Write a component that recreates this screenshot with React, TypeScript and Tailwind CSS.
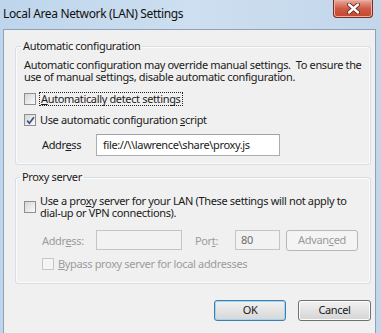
import type { ReactNode } from "react";

function Check({ checked = false, disabled = false }: { checked?: boolean; disabled?: boolean }) {
  return (
    <span
      className={`flex h-[12px] w-[12px] shrink-0 items-center justify-center border ${
        disabled
          ? "border-[#c6c6c6] bg-[#f4f4f4]"
          : "border-[#8e8f8f] bg-linear-to-br from-[#d6d6d6] to-[#fafafa]"
      }`}
    >
      {checked && (
        <svg width="9" height="9" viewBox="0 0 9 9">
          <path d="M1.2 4.6 L3.4 7.2 L7.9 1.2" stroke="#3a5186" strokeWidth="1.7" fill="none" />
        </svg>
      )}
    </span>
  );
}

function Key({ children }: { children: ReactNode }) {
  return <span className="underline underline-offset-[1px]">{children}</span>;
}

function Button({ children, primary = false, disabled = false, className = "" }: { children: ReactNode; primary?: boolean; disabled?: boolean; className?: string }) {
  return (
    <div
      className={`flex items-center justify-center rounded-[3px] border ${
        disabled
          ? "border-[#b5b8ba] bg-[#f4f4f4] text-[#9a9a9a]"
          : primary
          ? "border-[#3c7fb1] bg-linear-to-b from-[#f2f2f2] to-[#d6d6d6] shadow-[inset_0_0_0_1px_#a6d4f0]"
          : "border-[#707070] bg-linear-to-b from-[#f2f2f2] to-[#d4d4d4] shadow-[inset_0_0_0_1px_#fcfcfc]"
      } ${className}`}
    >
      {children}
    </div>
  );
}

export default function App() {
  return (
    <div className="flex h-[333px] w-[381px] flex-col overflow-hidden bg-linear-to-r from-[#bed5ec] via-[#cddff0] to-[#c3d6ea] font-['Segoe_UI','Noto_Sans',sans-serif] text-[11px] tracking-[-0.35px] text-[#1a1a1a] whitespace-nowrap">
      {/* title bar */}
      <div className="flex h-[29px] shrink-0 items-start justify-between pl-[3px] pr-[8px]">
        <span className="mt-[6px] text-[12px] leading-[16px] text-[#101010]">Local Area Network (LAN) Settings</span>
        <div className="flex h-[18px] w-[40px] items-center justify-center rounded-b-[4px] border border-t-0 border-[#7b2d23] bg-linear-to-b from-[#e8a99d] via-[#cf5a45] to-[#c5452f] shadow-[inset_0_0_0_1px_#eab0a5]">
          <svg width="13" height="11" viewBox="0 0 13 11">
            <path d="M2 1.5 L11 9.5 M11 1.5 L2 9.5" stroke="#5b1d14" strokeWidth="4" strokeLinecap="round" />
            <path d="M2 1.5 L11 9.5 M11 1.5 L2 9.5" stroke="#ffffff" strokeWidth="2.4" strokeLinecap="round" />
          </svg>
        </div>
      </div>

      {/* client area */}
      <div className="ml-[3px] mr-[5px] flex flex-1 flex-col border-l border-r border-t border-[#8da2b6] bg-[#f0f0f0] pl-[11px] pr-[4px]">
        <fieldset className="mt-[9px] rounded-[3px] border border-[#d5dfe5] px-[8px] pb-[8px] shadow-[inset_0_0_0_1px_#fbfbfb]">
          <legend className="-ml-[3px] px-[2px] leading-[14px]">Automatic configuration</legend>
          <div className="mt-[6px] leading-[12px]">
            Automatic configuration may override manual settings.&nbsp; To ensure the
            <br />
            use of manual settings, disable automatic configuration.
          </div>
          <div className="mt-[9px] flex h-[14px] items-center gap-[3px]">
            <Check />
            <span className="border border-dotted border-[#222] px-[1px] leading-[12px]">
              <Key>A</Key>utomatically detect settings
            </span>
          </div>
          <div className="mt-[7px] flex h-[14px] items-center gap-[4px]">
            <Check checked />
            <span className="leading-[12px]">
              Use automatic configuration <Key>s</Key>cript
            </span>
          </div>
          <div className="mt-[7px] flex h-[22px] items-center">
            <span className="w-[72px] pl-[18px]">
              Addr<Key>e</Key>ss
            </span>
            <div className="flex h-[22px] w-[184px] items-center border border-[#abadb3] border-t-[#a0a3aa] bg-white pl-[6px]">
              file://\\lawrence\share\proxy.js
            </div>
          </div>
        </fieldset>

        <fieldset className="mt-[5px] rounded-[3px] border border-[#d5dfe5] px-[8px] pb-[12px] shadow-[inset_0_0_0_1px_#fbfbfb]">
          <legend className="-ml-[4px] px-[2px] leading-[14px]">Proxy server</legend>
          <div className="mt-[11px] flex items-center gap-[4px]">
            <Check />
            <span className="leading-[12px]">
              Use a pro<Key>x</Key>y server for your LAN (These settings will not apply to
              <br />
              dial-up or VPN connections).
            </span>
          </div>
          <div className="mt-[11px] flex h-[21px] items-start text-[#9c9c9c]">
            <span className="mt-[3px] w-[72px] pl-[18px]">
              Addr<Key>e</Key>ss:
            </span>
            <div className="h-[20px] w-[86px] border border-[#c5c5c5] bg-[#f2f2f2]" />
            <span className="ml-[13px] mt-[3px] w-[40px]">
              Por<Key>t</Key>:
            </span>
            <div className="flex h-[20px] w-[45px] items-center border border-[#c5c5c5] bg-[#f2f2f2] pl-[5px] text-[#6d6d6d]">80</div>
            <Button disabled className="ml-[6px] h-[21px] w-[72px]">
              <span>
                Advan<Key>c</Key>ed
              </span>
            </Button>
          </div>
          <div className="mt-[6px] flex h-[14px] items-center gap-[4px] pl-[18px] text-[#9c9c9c]">
            <Check disabled />
            <span className="leading-[12px]">
              <Key>B</Key>ypass proxy server for local addresses
            </span>
          </div>
        </fieldset>

        <div className="mt-[16px] flex justify-end gap-[12px]">
          <Button primary className="h-[21px] w-[72px]">
            OK
          </Button>
          <Button className="h-[21px] w-[73px]">Cancel</Button>
        </div>
      </div>
    </div>
  );
}
